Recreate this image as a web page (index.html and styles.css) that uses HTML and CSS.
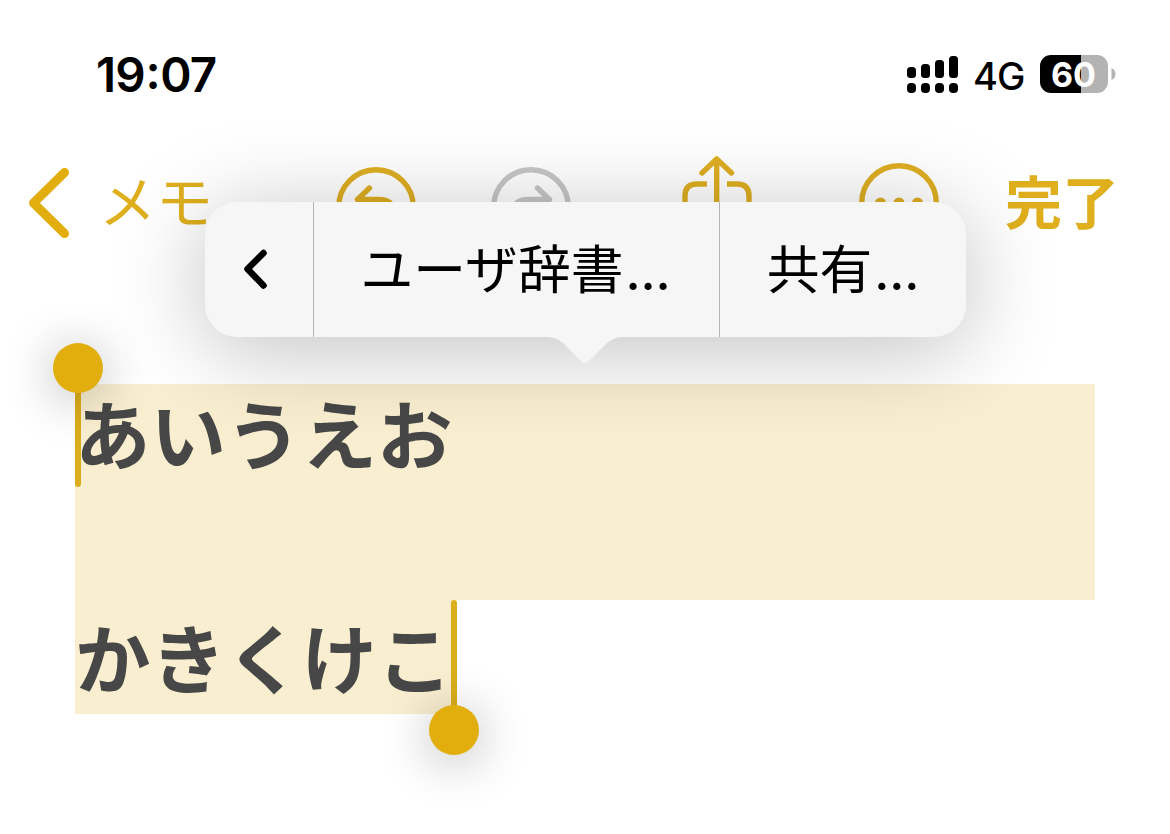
FILE: index.html
```
<!DOCTYPE html>
<html lang="ja">

<head>
    <meta charset="UTF-8">
    <meta name="viewport" content="width=device-width, initial-scale=1.0">
    <title>メモ</title>
    <link rel="stylesheet" href="styles.css">
</head>

<body>
    <div class="status">
        <div class="time">19<span class="colon">:</span>07</div>
        <div class="right">
            <svg class="signal" width="52" height="38" viewBox="0 0 52 38">
                <rect x="0" y="12" width="9" height="11" rx="3.5" />
                <rect x="14" y="9" width="9" height="14" rx="3.5" />
                <rect x="28" y="5" width="9" height="18" rx="3.5" />
                <rect x="42" y="1" width="9" height="22" rx="3.5" />
                <rect x="0" y="28" width="9" height="10" rx="4" />
                <rect x="14" y="28" width="9" height="10" rx="4" />
                <rect x="28" y="28" width="9" height="10" rx="4" />
                <rect x="42" y="28" width="9" height="10" rx="4" />
            </svg>
            <span class="network">4G</span>
            <div class="battery"><span class="level">60</span></div>
            <svg class="tip" width="5" height="12" viewBox="0 0 5 12">
                <path d="M0.500 0 Q4.500 2 4.500 6 Q4.500 10 0.500 12 Z" />
            </svg>
        </div>
    </div>

    <div class="nav">
        <div class="back">
            <svg width="42" height="72" viewBox="0 0 42 72">
                <path d="M36.500 5.500 L5.500 36 L36.500 66.500" stroke-width="9" />
            </svg>
            <span>メモ</span>
        </div>
        <div class="tools">
            <svg width="80" height="80" viewBox="0 0 80 80">
                <circle cx="40" cy="40" r="37.300" />
                <path d="M33.500 21 L21.500 32.500 L33.500 44 M21.500 32.500 H43 Q57 32.500 57 45 Q57 56 46 57 H38" />
            </svg>
            <svg class="redo" width="80" height="80" viewBox="0 0 80 80">
                <circle cx="40" cy="40" r="37.300" />
                <path d="M46.500 21 L58.500 32.500 L46.500 44 M58.500 32.500 H37 Q23 32.500 23 45 Q23 56 34 57 H42" />
            </svg>
            <svg class="share" width="70" height="92" viewBox="0 0 70 92">
                <path d="M20 17 L34.700 3 L49.500 17 M34.700 3 V60" />
                <path class="square" d="M25 28 H15 Q3 28 3 40 V75 Q3 87 15 87 H55 Q67 87 67 75 V40 Q67 28 55 28 H45" />
            </svg>
            <svg class="more" width="80" height="80" viewBox="0 0 80 80">
                <circle cx="40" cy="40" r="37.300" />
                <circle class="dot" cx="21.500" cy="40" r="5.500" />
                <circle class="dot" cx="40" cy="40" r="5.500" />
                <circle class="dot" cx="58.500" cy="40" r="5.500" />
            </svg>
        </div>
        <div class="done">完了</div>
    </div>

    <div class="note">
        <div class="line first">
            <span class="handle start"></span>
            あいうえお
        </div>
        <div class="line empty"></div>
        <div class="line last">
            かきくけこ
            <span class="handle end"></span>
        </div>
    </div>

    <div class="menu">
        <div class="item prev">
            <svg width="26" height="42" viewBox="0 0 26 42">
                <path d="M20.500 4 L4.500 20 L20.500 36.500" />
            </svg>
        </div>
        <div class="item dict">ユーザ辞書<span class="dots">...</span></div>
        <div class="item send">共有<span class="dots">...</span></div>
        <svg class="arrow" width="80" height="29" viewBox="0 0 80 29">
            <path d="M0 0 V1 H2 Q12 1 20 9 L36 25 Q40 29 44 25 L60 9 Q68 1 78 1 H80 V0 Z" />
        </svg>
    </div>
</body>

</html>
```
FILE: styles.css
```
*{
    margin: 0;
    padding: 0;
    box-sizing: border-box;
}
body{
    height: 834px;
    background-color: white;
    font-family: "Noto Sans CJK JP", sans-serif;
    position: relative;
    overflow: hidden;
}
.status{
    height: 150px;
    padding: 0 54px 2px 96px;
    display: flex;
    align-items: center;
    justify-content: space-between;
    font-family: Inter, sans-serif;
}
.time{
    font-size: 47.5px;
    font-weight: 600;
    letter-spacing: -0.8px;
}
.colon{
    margin: 0 0.5px;
    position: relative;
    top: -3px;
}
.right{
    display: flex;
    align-items: center;
}
.signal{
    margin-right: 14px;
}
.network{
    width: 67px;
    padding-top: 4px;
    font-size: 38px;
    font-weight: 500;
    letter-spacing: -1px;
}
.battery{
    width: 68px;
    height: 38px;
    border-radius: 11px;
    background: linear-gradient(to right, black 60%, #b3b3b3 60%);
    display: flex;
    align-items: center;
    justify-content: center;
}
.level{
    padding-right: 1px;
    color: white;
    font-size: 34px;
    font-weight: 700;
}
.tip{
    margin-left: 3px;
    fill: #b3b3b3;
}
.nav{
    height: 106px;
    padding: 0 51px 0 28px;
    display: flex;
    align-items: center;
    color: #dfaf1d;
}
.nav svg{
    fill: none;
    stroke: #deae22;
    stroke-width: 5.4;
    stroke-linecap: round;
    stroke-linejoin: round;
}
.back{
    width: 308px;
    display: flex;
    align-items: center;
    gap: 29px;
    font-size: 57px;
    font-weight: 400;
}
.nav .back svg{
    stroke: #e2ae0d;
}
.back span{
    padding-bottom: 10px;
}
.tools{
    flex: 1;
    display: flex;
    align-items: center;
    padding-top: 8px;
}
.nav .redo{
    margin-left: 75px;
    stroke: #c6c6c8;
}
.share{
    margin: 0 107px 11px 111px;
}
.nav .square{
    stroke-linecap: butt;
}
.more{
    margin-bottom: 8px;
}
.nav .dot{
    fill: #deae22;
    stroke: none;
}
.done{
    padding-bottom: 8px;
    font-size: 57px;
    font-weight: 700;
}
.note{
    padding: 128px 75px 0;
    color: #474747;
    font-size: 75.5px;
    font-weight: 700;
}
.line{
    height: 113px;
    line-height: 95px;
    background-color: #f9eecf;
    position: relative;
}
.empty{
    height: 103px;
}
.last{
    width: 379px;
    height: 114px;
    line-height: 111px;
}
.handle{
    width: 6px;
    height: 112px;
    border-radius: 3px;
    background-color: #dcae1c;
    position: absolute;
}
.handle::after{
    content: "";
    width: 50px;
    height: 50px;
    border-radius: 50%;
    background-color: #e2ae0d;
    box-shadow: 0 6px 50px rgba(0, 0, 0, 0.3);
    position: absolute;
    left: -22px;
}
/* knob sits above the selection at the start and below it at the end */
.start{
    left: 0;
    top: -9px;
}
.start::after{
    top: -32px;
}
.end{
    right: -3px;
    top: 0;
}
.end::after{
    top: 105px;
}
.menu{
    width: 761px;
    height: 135px;
    border-radius: 32px;
    background-color: #f6f6f6;
    box-shadow: 0 12px 90px rgba(0, 0, 0, 0.25);
    display: flex;
    color: black;
    font-size: 52.8px;
    font-weight: 400;
    position: absolute;
    left: 205px;
    top: 202px;
}
.item{
    display: flex;
    align-items: center;
    justify-content: center;
}
.prev{
    width: 109px;
    border-right: 1px solid #b4b4b4;
}
.prev svg{
    margin-right: 7px;
    fill: none;
    stroke: black;
    stroke-width: 6.5;
    stroke-linecap: round;
    stroke-linejoin: round;
}
.dict{
    width: 406px;
    padding: 0 2px 7px 0;
    border-right: 1px solid #b4b4b4;
}
.send{
    flex: 1;
    padding-bottom: 7px;
}
.dots{
    padding: 11px 0 0 2px;
    font-family: Inter, sans-serif;
    font-size: 50px;
    font-weight: 500;
    letter-spacing: -0.2px;
}
.arrow{
    fill: #f6f6f6;
    position: absolute;
    left: 340px;
    top: 134px;
}
```
